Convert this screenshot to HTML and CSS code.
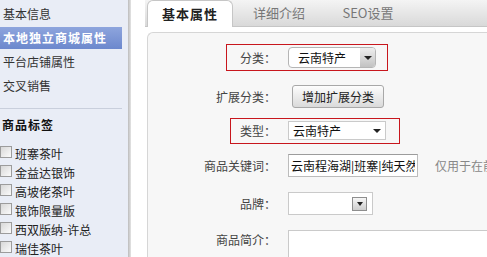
FILE: index.html
```html
<!DOCTYPE html>
<html lang="zh-CN">

<head>
    <meta charset="UTF-8">
    <meta name="viewport" content="width=device-width, initial-scale=1.0">
    <title>商品属性</title>
    <link rel="stylesheet" href="styles.css">
</head>

<body>
    <div class="page">
        <aside class="sidebar">
            <ul class="side-menu">
                <li><a href="">基本信息</a></li>
                <li class="active"><a href="">本地独立商城属性</a></li>
                <li><a href="">平台店铺属性</a></li>
                <li><a href="">交叉销售</a></li>
            </ul>
            <h3 class="side-title">商品标签</h3>
            <ul class="tag-list">
                <li><label><input type="checkbox">班寨茶叶</label></li>
                <li><label><input type="checkbox">金益达银饰</label></li>
                <li><label><input type="checkbox">高坡佬茶叶</label></li>
                <li><label><input type="checkbox">银饰限量版</label></li>
                <li><label><input type="checkbox">西双版纳-许总</label></li>
                <li><label><input type="checkbox">瑞佳茶叶</label></li>
            </ul>
        </aside>
        <div class="side-shadow"></div>

        <main class="main">
            <ul class="tabs">
                <li class="active">基本属性</li>
                <li>详细介绍</li>
                <li>SEO设置</li>
            </ul>

            <div class="panel">
                <div class="form-row row-cat">
                    <span class="form-label">分类：</span>
                    <div class="select select-cat">
                        <span>云南特产</span>
                        <span class="select-btn"><i class="arrow"></i></span>
                    </div>
                    <div class="mark mark-cat"></div>
                </div>

                <div class="form-row row-ext">
                    <span class="form-label">扩展分类：</span>
                    <button class="btn-ext">增加扩展分类</button>
                </div>

                <div class="form-row row-type">
                    <span class="form-label">类型：</span>
                    <div class="select select-type">
                        <span>云南特产</span>
                        <i class="arrow"></i>
                    </div>
                    <div class="mark mark-type"></div>
                </div>

                <div class="form-row row-keyword">
                    <span class="form-label">商品关键词：</span>
                    <input class="input-keyword" type="text" value="云南程海湖|班寨|纯天然|普洱茶">
                    <span class="hint">仅用于在前台搜索</span>
                </div>

                <div class="form-row row-brand">
                    <span class="form-label">品牌：</span>
                    <div class="select select-brand">
                        <span class="brand-btn"><i class="arrow arrow-small"></i></span>
                    </div>
                </div>

                <div class="form-row row-intro">
                    <span class="form-label">商品简介：</span>
                    <textarea class="intro-text"></textarea>
                </div>
            </div>
        </main>
    </div>
</body>

</html>
```

FILE: styles.css
```css
* {
    margin: 0;
    padding: 0;
    box-sizing: border-box;
    text-decoration: none;
    list-style: none;
}

body {
    font-family: "Noto Sans CJK SC", "Noto Sans", sans-serif;
    font-size: 12px;
    color: #333;
    background-color: #fff;
    overflow: hidden;
}

.page {
    display: flex;
    height: 100vh;
}

/* left menu */
.sidebar {
    width: 128px;
    flex-shrink: 0;
    background-color: #e9edf6;
    padding-top: 2px;
}

.side-menu li a {
    display: block;
    width: 122px;
    height: 24px;
    line-height: 24px;
    padding-left: 3px;
    color: #333;
}

.side-menu li.active a {
    height: 22px;
    line-height: 22px;
    margin: 1px 0;
    background: linear-gradient(#8ea5dd, #6c88cd);
    color: #fff;
    font-weight: bold;
    letter-spacing: 1px;
}

.side-title {
    width: 122px;
    margin-top: 10px;
    padding: 6px 0 0 2px;
    border-top: 1px solid #c9cfdc;
    line-height: 20px;
    font-size: 12px;
    letter-spacing: 1px;
    color: #111;
}

.tag-list {
    margin-top: 9px;
}

.tag-list li {
    height: 19px;
    display: flex;
    align-items: center;
}

.tag-list label {
    display: flex;
    align-items: center;
    gap: 3px;
    color: #222;
}

.tag-list input {
    appearance: none;
    width: 12px;
    height: 12px;
    margin-bottom: 3px;
    border: 1px solid #9c9c9c;
    background: linear-gradient(135deg, #d8d8d8, #fbfbfb);
}

.side-shadow {
    width: 3px;
    flex-shrink: 0;
    background: linear-gradient(to right, #bcbcbc, #e4e4e4);
}

/* tabs */
.main {
    flex: 1;
    min-width: 0;
    overflow: hidden;
}

.tabs {
    display: flex;
    align-items: flex-start;
    gap: 3px;
    height: 27px;
    margin-left: 14px;
    padding-left: 2px;
    background: linear-gradient(#f4f4f4, #d9d9d9);
    border-bottom: 1px solid #c6c6c6;
}

.tabs li {
    width: 86px;
    height: 27px;
    flex-shrink: 0;
    line-height: 26px;
    text-align: center;
    font-size: 13px;
    color: #777;
}

.tabs li.active {
    background-color: #fff;
    border: 1px solid #c6c6c6;
    border-bottom: 0;
    border-radius: 6px 6px 0 0;
    line-height: 25px;
    font-weight: bold;
    letter-spacing: 1px;
    color: #222;
}

/* form panel */
.panel {
    height: 400px;
    margin: 5px 0 0 16px;
    padding-top: 5px;
    background-color: #f7f7f7;
    border-top: 1px solid #d6d6d6;
    border-left: 1px solid #d6d6d6;
    border-radius: 6px 0 0 0;
}

.form-row {
    position: relative;
    display: flex;
    align-items: center;
}

.form-row > * {
    flex-shrink: 0;
}

.form-label {
    width: 128px;
    margin-right: 12px;
    text-align: right;
    color: #444;
}

.row-cat { height: 39px; }
.row-ext { height: 39px; }
.row-type { height: 29px; }
.row-keyword { height: 41px; }
.row-brand { height: 35px; }

.row-intro {
    align-items: flex-start;
    padding-top: 9px;
}

.row-intro .form-label {
    line-height: 20px;
}

.select {
    display: flex;
    align-items: center;
    background-color: #fff;
    color: #111;
}

.select-cat {
    width: 88px;
    height: 21px;
    justify-content: space-between;
    padding-left: 9px;
    border: 1px solid #b5b5b5;
    border-radius: 4px;
    overflow: hidden;
}

.select-btn {
    width: 15px;
    height: 100%;
    display: flex;
    align-items: center;
    justify-content: center;
    background: linear-gradient(#eeeeee, #c2c2c2);
}

.arrow {
    display: block;
    border-left: 4px solid transparent;
    border-right: 4px solid transparent;
    border-top: 4px solid #222;
}

.arrow-small {
    border-left-width: 3px;
    border-right-width: 3px;
    border-top-width: 4px;
}

.btn-ext {
    width: 92px;
    height: 23px;
    margin-left: 4px;
    border: 1px solid #a8a8a8;
    border-radius: 3px;
    background: linear-gradient(#fdfdfd, #dadada);
    font-family: inherit;
    font-size: 12px;
    color: #222;
}

.select-type {
    width: 98px;
    height: 19px;
    justify-content: space-between;
    padding: 0 4px 0 4px;
    border: 1px solid #cacaca;
}

.input-keyword {
    width: 130px;
    height: 23px;
    padding: 0 2px;
    border: 1px solid #bcbcbc;
    border-top-color: #9c9c9c;
    background-color: #fff;
    font-family: inherit;
    font-size: 12px;
    color: #111;
    outline: none;
}

.hint {
    margin-left: 17px;
    white-space: nowrap;
    color: #888;
}

.select-brand {
    width: 85px;
    height: 23px;
    justify-content: flex-end;
    padding-right: 5px;
    border: 1px solid #cacaca;
}

.brand-btn {
    width: 15px;
    height: 14px;
    display: flex;
    align-items: center;
    justify-content: center;
    border: 1px solid #8e8e8e;
    background: linear-gradient(#f6f6f6, #cdcdcd);
}

.intro-text {
    width: 260px;
    height: 60px;
    border: 1px solid #cacaca;
    background-color: #fff;
    resize: none;
}

/* red highlight boxes over the form */
.mark {
    position: absolute;
    border: 1px solid #c8161d;
    pointer-events: none;
}

.mark-cat {
    left: 78px;
    top: 6px;
    width: 162px;
    height: 27px;
}

.mark-type {
    left: 82px;
    top: 2px;
    width: 170px;
    height: 26px;
}
```
